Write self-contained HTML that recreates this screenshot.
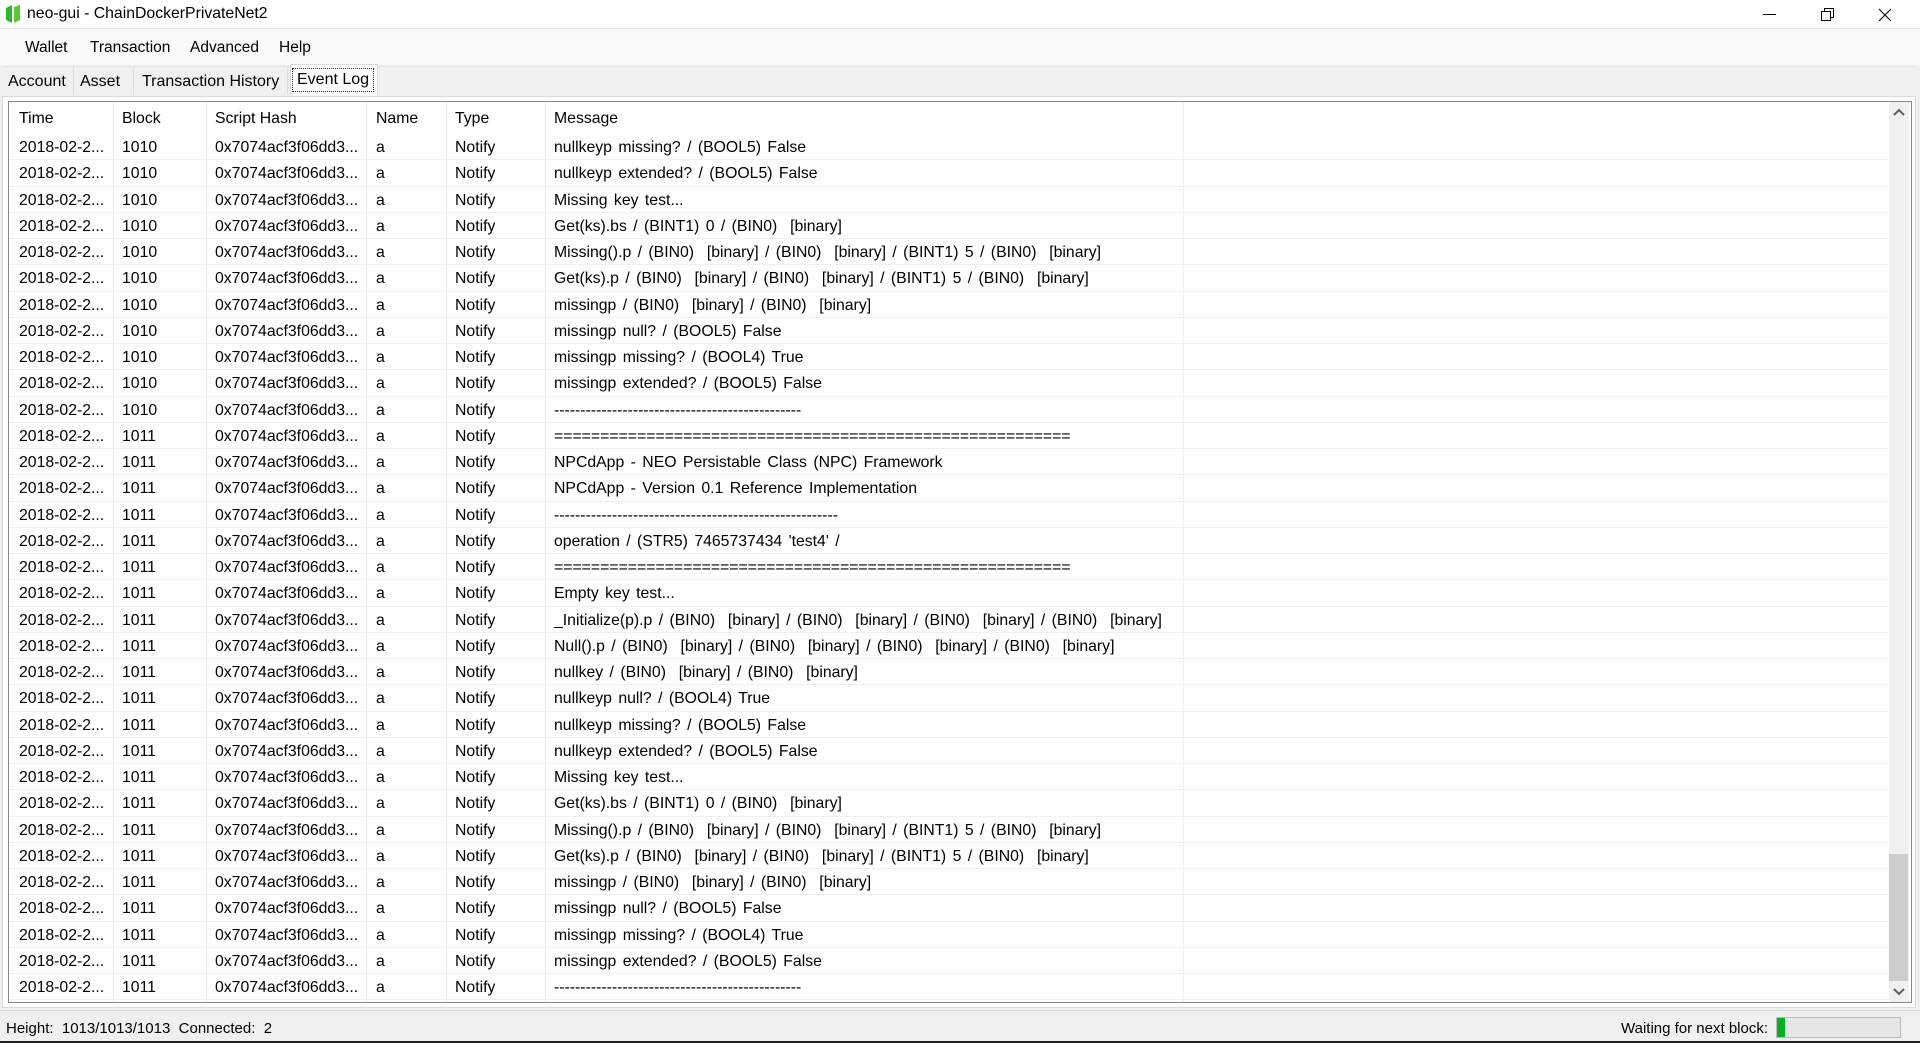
<!DOCTYPE html>
<html><head><meta charset="utf-8"><style>
*{margin:0;padding:0;box-sizing:border-box}
body{width:1920px;height:1043px;overflow:hidden;background:#f0f0f0;font-family:"Liberation Sans",sans-serif;font-size:15.8px;color:#000;position:relative}
.abs{position:absolute}
#title{left:0;top:0;width:1920px;height:29px;background:#fff;border-bottom:1px solid #e5e5e5}
#menu{left:0;top:29px;width:1920px;height:36px;background:#f9f9f9}
.mi{position:absolute;top:39px;font-size:15.5px}
.tab{position:absolute;top:67px;height:28px;line-height:30px;border-right:1px solid #dcdcdc;font-size:16px;padding-left:2px}
#list{left:8px;top:101px;width:1904px;height:902px;background:#fff;border:1px solid #828790;overflow:hidden}
.row{position:absolute;left:0;height:26.25px;width:1880px;border-bottom:1px solid #f0f0f0}
.c{position:absolute;top:1px;height:26px;line-height:26px;white-space:pre;overflow:hidden}
.m{word-spacing:2px}
.vl{position:absolute;top:0;width:1px;height:902px;background:#f0f0f0}
</style></head><body>
<div id="title" class="abs"></div>
<svg class="abs" style="left:5px;top:5px" width="16" height="18" viewBox="0 0 16 18"><path d="M1 3 L7 0 L7 18 L1 15Z" fill="#2db82d"/><path d="M9 2 L15 0 L15 15 L9 18Z" fill="#58c934"/></svg>
<div class="abs" style="left:27px;top:5px;font-size:15.8px">neo-gui - ChainDockerPrivateNet2</div>
<svg class="abs" style="left:1763px;top:8px" width="150" height="14"><line x0="0" x1="13" y1="6.5" y2="6.5" stroke="#000"/><rect x="58.5" y="3.5" width="9" height="9" fill="none" stroke="#000"/><path d="M61.5 3.5V0.5H70.5V9.5H67.5" fill="none" stroke="#000"/><path d="M116 1L128 13M128 1L116 13" stroke="#000" stroke-width="1.1"/></svg>
<div id="menu" class="abs"></div>
<div class="mi" style="left:25px">Wallet</div>
<div class="mi" style="left:90px">Transaction</div>
<div class="mi" style="left:190px">Advanced</div>
<div class="mi" style="left:279px">Help</div>
<div class="abs" style="left:2px;top:66px;width:1914px;height:1px;background:#e3e3e3"></div>
<div class="tab" style="left:6px;width:68px">Account</div>
<div class="tab" style="left:78px;width:56px">Asset</div>
<div class="tab" style="left:140px;width:148px">Transaction History</div>
<div class="abs" style="left:290px;top:64px;width:88px;height:34px;background:#fff;border:1px solid #d9d9d9;border-bottom:none"></div>
<div class="abs" style="left:292px;top:68px;width:82px;height:24px;border:1px dotted #333;line-height:22px;padding-left:4px;font-size:16px">Event Log</div>
<div class="abs" style="left:2px;top:96px;width:1914px;height:912px;background:#fff;border:1px solid #d9d9d9"></div>
<div id="list" class="abs">
<div class="vl" style="left:104px"></div><div class="vl" style="left:197px"></div><div class="vl" style="left:357px"></div><div class="vl" style="left:437px"></div><div class="vl" style="left:536px"></div><div class="vl" style="left:1174px"></div>
<div class="row" style="top:3px;height:27px;border:none">
<div class="c" style="left:10px">Time</div><div class="c" style="left:113px">Block</div><div class="c" style="left:206px">Script Hash</div><div class="c" style="left:367px">Name</div><div class="c" style="left:446px">Type</div><div class="c" style="left:545px">Message</div></div>
<div id="rows"></div>
<div class="abs" style="left:1880px;top:0;width:20px;height:900px;background:#f0f0f0"></div>
<div class="abs" style="left:1880px;top:752px;width:19px;height:127px;background:#cdcdcd"></div>
<svg class="abs" style="left:1883px;top:6px" width="14" height="10"><path d="M2 7L7 2L12 7" fill="none" stroke="#606060" stroke-width="2"/></svg>
<svg class="abs" style="left:1883px;top:885px" width="14" height="10"><path d="M2 2L7 7L12 2" fill="none" stroke="#606060" stroke-width="2"/></svg>
</div>
<div class="abs" style="left:0;top:1010px;width:1920px;height:1px;background:#dadada"></div>
<div class="abs" style="left:6px;top:1020px;white-space:pre;font-size:15px">Height:  1013/1013/1013  Connected:  2</div>
<div class="abs" style="left:1621px;top:1020px;font-size:15px">Waiting for next block:</div>
<div class="abs" style="left:1776px;top:1017px;width:125px;height:21px;background:#e6e6e6;border:1px solid #bcbcbc"></div>
<div class="abs" style="left:1777px;top:1018px;width:8px;height:19px;background:#06b025"></div>
<div class="abs" style="left:0;top:1041px;width:1920px;height:2px;background:#222"></div>
<script>
var m=["nullkeyp missing? / (BOOL5) False","nullkeyp extended? / (BOOL5) False","Missing key test...","Get(ks).bs / (BINT1) 0 / (BIN0)  [binary]","Missing().p / (BIN0)  [binary] / (BIN0)  [binary] / (BINT1) 5 / (BIN0)  [binary]","Get(ks).p / (BIN0)  [binary] / (BIN0)  [binary] / (BINT1) 5 / (BIN0)  [binary]","missingp / (BIN0)  [binary] / (BIN0)  [binary]","missingp null? / (BOOL5) False","missingp missing? / (BOOL4) True","missingp extended? / (BOOL5) False","D47","E56","NPCdApp - NEO Persistable Class (NPC) Framework","NPCdApp - Version 0.1 Reference Implementation","D54","operation / (STR5) 7465737434 'test4' /","E56","Empty key test...","_Initialize(p).p / (BIN0)  [binary] / (BIN0)  [binary] / (BIN0)  [binary] / (BIN0)  [binary]","Null().p / (BIN0)  [binary] / (BIN0)  [binary] / (BIN0)  [binary] / (BIN0)  [binary]","nullkey / (BIN0)  [binary] / (BIN0)  [binary]","nullkeyp null? / (BOOL4) True","nullkeyp missing? / (BOOL5) False","nullkeyp extended? / (BOOL5) False","Missing key test...","Get(ks).bs / (BINT1) 0 / (BIN0)  [binary]","Missing().p / (BIN0)  [binary] / (BIN0)  [binary] / (BINT1) 5 / (BIN0)  [binary]","Get(ks).p / (BIN0)  [binary] / (BIN0)  [binary] / (BINT1) 5 / (BIN0)  [binary]","missingp / (BIN0)  [binary] / (BIN0)  [binary]","missingp null? / (BOOL5) False","missingp missing? / (BOOL4) True","missingp extended? / (BOOL5) False","D47"];
var h="";
for(var i=0;i<m.length;i++){var t=m[i];var cl="c m";
if(/^D\d+$/.test(t)){var n=+t.slice(1);t=Array(n+1).join("-");cl="c";}
if(/^E\d+$/.test(t)){var n=+t.slice(1);t=Array(n+1).join("=");cl="c";}
var b=i<11?"1010":"1011";
h+='<div class="row" style="top:'+(32+i*26.25)+'px"><div class="c" style="left:10px">2018-02-2...</div><div class="c" style="left:113px">'+b+'</div><div class="c" style="left:206px">0x7074acf3f06dd3...</div><div class="c" style="left:367px">a</div><div class="c" style="left:446px">Notify</div><div class="'+cl+'" style="left:545px">'+t.replace(/&/g,"&amp;").replace(/</g,"&lt;")+'</div></div>';}
document.getElementById("rows").innerHTML=h;
</script>
</body></html>
